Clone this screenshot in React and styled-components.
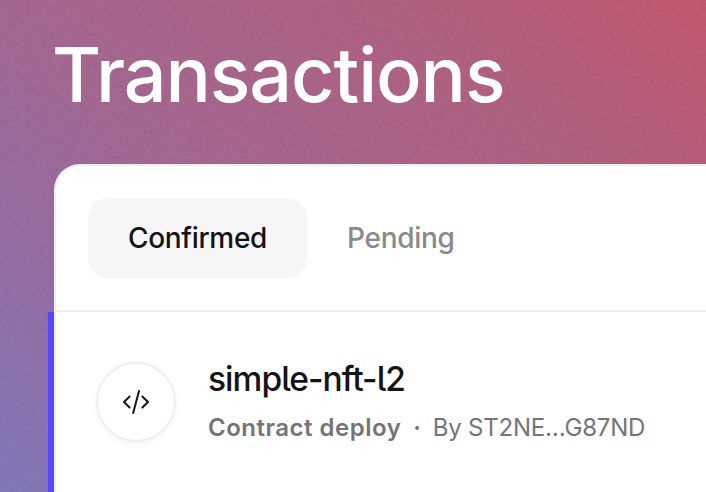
import React from 'react';
import styled, { createGlobalStyle } from 'styled-components';

const GlobalStyle = createGlobalStyle`
  *, *::before, *::after { box-sizing: border-box; }
  html, body { margin: 0; padding: 0; overflow: hidden; }
  body { font-family: Inter, 'Liberation Sans', sans-serif; -webkit-font-smoothing: antialiased; }
`;

const Page = styled.div`
  position: relative;
  width: 706px;
  height: 492px;
  overflow: hidden;
  display: flex;
  flex-direction: column;
  padding-left: 54px;
  background: linear-gradient(40deg, #7d73b7 0%, #8f68a2 22%, #9f628f 42%, #ae5a7b 76%, #c05268 100%);
`;

const Grain = styled.svg`
  position: absolute;
  inset: 0;
  width: 100%;
  height: 100%;
  opacity: 0.12;
`;

const Title = styled.h1`
  position: relative;
  margin: 0 0 0 -2px;
  height: 164px;
  padding-top: 29px;
  font-size: 75.5px;
  font-weight: 500;
  line-height: 92px;
  letter-spacing: -1.1px;
  color: #fff;
  white-space: nowrap;
`;

const Card = styled.section`
  position: relative;
  flex: 1;
  margin-right: -40px;
  background: #fff;
  border: 2px solid #efeff2;
  border-bottom: 0;
  border-top-left-radius: 26px;
`;

const Tabs = styled.div`
  display: flex;
  height: 146px;
  padding: 32px;
  border-bottom: 2px solid #efeff0;
`;

const Tab = styled.button`
  height: 80px;
  padding: 0 40px;
  border: 0;
  border-radius: 20px;
  font: 500 28px/80px Inter, sans-serif;
  letter-spacing: -0.31px;
  color: ${(p) => (p.$active ? '#141416' : '#8a8a8b')};
  background: ${(p) => (p.$active ? '#f6f6f9' : 'transparent')};
`;

const Row = styled.article`
  position: relative;
  display: flex;
  gap: 32px;
  height: 180px;
  padding: 50px 40px 0;

  &::before {
    content: '';
    position: absolute;
    left: -8px;
    top: 0;
    bottom: 0;
    width: 6px;
    background: #5546ff;
  }
`;

const IconCircle = styled.div`
  display: flex;
  align-items: center;
  justify-content: center;
  width: 80px;
  height: 80px;
  border: 2px solid #efeff0;
  border-radius: 50%;
  box-shadow: 0 2px 5px rgba(0, 0, 0, 0.05);
`;

const Details = styled.div`
  display: flex;
  flex-direction: column;
`;

const Name = styled.div`
  height: 48px;
  margin-top: -7px;
  font-size: 33.5px;
  font-weight: 500;
  line-height: 48px;
  letter-spacing: -0.95px;
  font-feature-settings: 'cv05' 1;
  color: #141416;
`;

const Caption = styled.div`
  display: flex;
  height: 32px;
  margin-top: 9px;
  font-size: 24px;
  line-height: 32px;
  color: #747478;
  white-space: nowrap;
`;

const Kind = styled.span`
  font-weight: 600;
  letter-spacing: 0.5px;
`;

const Dot = styled.span`
  width: 31.5px;
  text-align: center;
  font-weight: 600;
`;

const Sender = styled.span`
  letter-spacing: -0.22px;
`;

export default function App() {
  return (
    <>
      <GlobalStyle />
      <Page>
        <Grain aria-hidden="true">
          <filter id="grain">
            <feTurbulence type="fractalNoise" baseFrequency="0.3" numOctaves="3" seed="4" />
            <feColorMatrix type="saturate" values="0.5" />
          </filter>
          <rect width="100%" height="100%" filter="url(#grain)" />
        </Grain>
        <Title>Transactions</Title>
        <Card>
          <Tabs>
            <Tab $active>Confirmed</Tab>
            <Tab>Pending</Tab>
          </Tabs>
          <Row>
            <IconCircle>
              <svg width="28" height="28" viewBox="0 0 28 28" fill="none" stroke="#141416" strokeWidth="2" strokeLinecap="round" strokeLinejoin="round">
                <path d="M7.6 8.5 2 14 7.6 19.5M20.4 8.5 26 14 20.4 19.5M17 3 11.2 25" />
              </svg>
            </IconCircle>
            <Details>
              <Name>simple-nft-l2</Name>
              <Caption>
                <Kind>Contract deploy</Kind>
                <Dot>·</Dot>
                <Sender>By ST2NE…G87ND</Sender>
              </Caption>
            </Details>
          </Row>
        </Card>
      </Page>
    </>
  );
}
